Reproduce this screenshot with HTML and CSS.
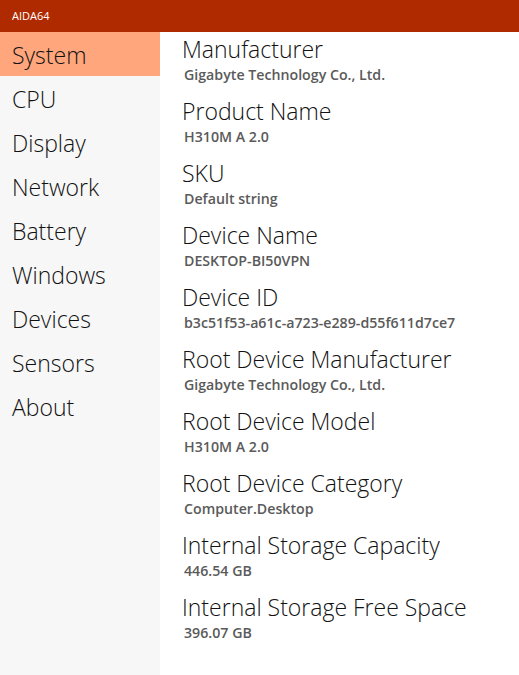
FILE: index.html
```html
<!DOCTYPE html>
<html>
<head>
<meta charset="utf-8">
<link rel="stylesheet" href="styles.css">
</head>
<body>
<div class="titlebar">AIDA64</div>
<div class="main">
  <nav class="sidebar">
    <div class="nav-item active">System</div>
    <div class="nav-item">CPU</div>
    <div class="nav-item">Display</div>
    <div class="nav-item">Network</div>
    <div class="nav-item">Battery</div>
    <div class="nav-item">Windows</div>
    <div class="nav-item">Devices</div>
    <div class="nav-item">Sensors</div>
    <div class="nav-item">About</div>
  </nav>
  <section class="content">
    <div class="field"><div class="label">Manufacturer</div><div class="value">Gigabyte Technology Co., Ltd.</div></div>
    <div class="field"><div class="label">Product Name</div><div class="value">H310M A 2.0</div></div>
    <div class="field"><div class="label">SKU</div><div class="value">Default string</div></div>
    <div class="field"><div class="label">Device Name</div><div class="value">DESKTOP-BI50VPN</div></div>
    <div class="field"><div class="label">Device ID</div><div class="value">b3c51f53-a61c-a723-e289-d55f611d7ce7</div></div>
    <div class="field"><div class="label">Root Device Manufacturer</div><div class="value">Gigabyte Technology Co., Ltd.</div></div>
    <div class="field"><div class="label">Root Device Model</div><div class="value">H310M A 2.0</div></div>
    <div class="field"><div class="label">Root Device Category</div><div class="value">Computer.Desktop</div></div>
    <div class="field"><div class="label">Internal Storage Capacity</div><div class="value">446.54 GB</div></div>
    <div class="field"><div class="label">Internal Storage Free Space</div><div class="value">396.07 GB</div></div>
  </section>
</div>
</body>
</html>
```
FILE: styles.css
```css
* { box-sizing: border-box; }
html, body { margin: 0; padding: 0; height: 100%; }
body {
  font-family: "Open Sans", "Noto Sans", sans-serif;
  background: #ffffff;
  color: #000;
  display: flex;
  flex-direction: column;
  overflow: hidden;
}
.titlebar {
  height: 32px;
  background: #b02a00;
  color: #fff;
  font-size: 11px;
  padding-left: 12px;
  line-height: 32px;
  flex-shrink: 0;
}
.main {
  flex: 1;
  display: flex;
}
.sidebar {
  width: 160px;
  background: #f7f7f7;
  flex-shrink: 0;
}
.nav-item {
  height: 44px;
  line-height: 46px;
  padding-left: 12px;
  font-size: 23px;
  font-weight: 300;
  color: #111;
}
.nav-item.active {
  background: #ffa67c;
}
.content {
  flex: 1;
  padding: 1px 0 0 22px;
}
.field {
  height: 62px;
}
.label {
  font-size: 23px;
  font-weight: 300;
  line-height: 32px;
  color: #111;
}
.value {
  font-size: 14.2px;
  font-weight: 600;
  color: #5a5a5a;
  padding-left: 2px;
  line-height: 20px;
}
```
